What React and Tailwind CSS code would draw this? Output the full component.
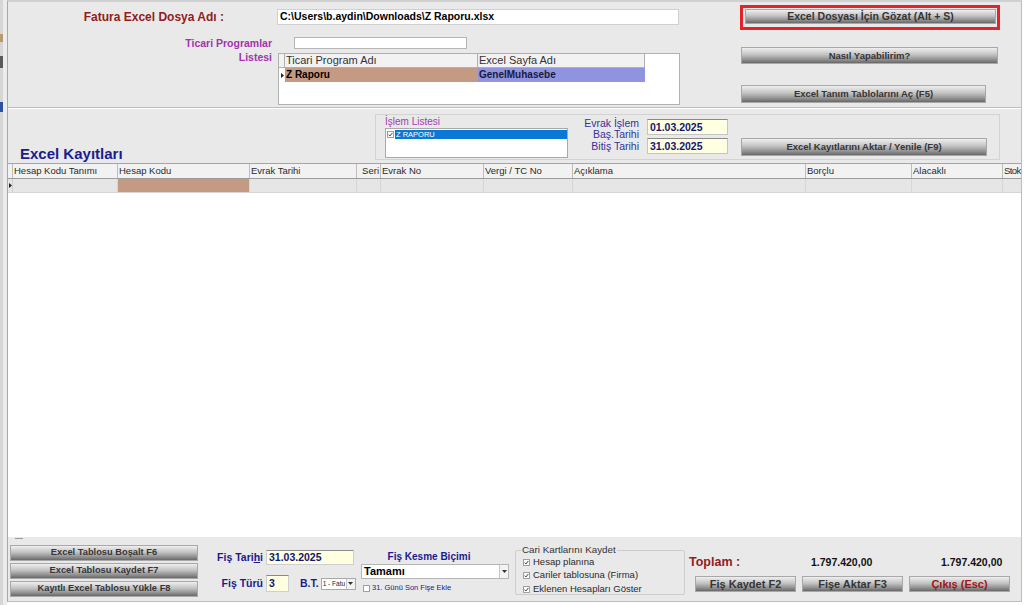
import React from 'react';

const Check = ({ checked = true }) => (
  <svg width="7" height="7" viewBox="0 0 7 7" className="shrink-0">
    <rect x="0.5" y="0.5" width="6" height="6" fill="#fff" stroke="#a0a0a0" />
    {checked && <path d="M1.5 3.6 L2.9 5 L5.4 1.9" fill="none" stroke="#444" strokeWidth="1" />}
  </svg>
);

const Arrow = () => (
  <div className="w-[9px] shrink-0 self-stretch flex items-center justify-center bg-[#f3f3f3] border-l border-[#c8c8c8]">
    <svg width="5" height="3" viewBox="0 0 5 3"><path d="M0 0 H5 L2.5 3 Z" fill="#333" /></svg>
  </div>
);

function Btn({ children, className = '', text = 'text-[#353535]' }) {
  return (
    <div className={`flex items-center justify-center border border-[#a8a8a8] bg-[linear-gradient(#efefef,#c2c2c2_45%,#8c8c8c_80%,#686868)] font-bold leading-none whitespace-nowrap ${text} ${className}`}>
      {children}
    </div>
  );
}

const gridCols = [
  { label: 'Hesap Kodu Tanımı', w: 'w-[105px]', cell: '', pad: 'px-[1px]' },
  { label: 'Hesap Kodu', w: 'w-[132px]', cell: 'bg-[#c59a83]', pad: 'px-[1px]' },
  { label: 'Evrak Tarihi', w: 'w-[107px]', cell: '', pad: 'px-[1px]' },
  { label: 'Seri', w: 'w-[24px]', cell: '', pad: 'px-[1px] text-right' },
  { label: 'Evrak No', w: 'w-[103px]', cell: '', pad: 'px-[1px]' },
  { label: 'Vergi / TC No', w: 'w-[89px]', cell: '', pad: 'px-[1px]' },
  { label: 'Açıklama', w: 'w-[233px]', cell: '', pad: 'px-[1px]' },
  { label: 'Borçlu', w: 'w-[106px]', cell: '', pad: 'px-[1px]' },
  { label: 'Alacaklı', w: 'w-[91px]', cell: '', pad: 'px-[1px]' },
  { label: 'Stok', w: 'w-[40px]', cell: '', pad: 'pl-[1px] tracking-[-0.6px]' },
];

export default function App() {
  return (
    <div className="w-[1024px] h-[605px] overflow-hidden bg-white flex font-['Liberation_Sans',Arial,sans-serif] text-[#222]">
      {/* window behind */}
      <div className="w-[7px] h-full flex bg-[#ececec]">
        <div className="w-[3px] h-full flex flex-col bg-[#d6d6d6]">
          <div className="h-[34px]" />
          <div className="h-[8px] bg-[#b89a72]" />
          <div className="h-[14px]" />
          <div className="h-[12px] bg-[#5a5a5a]" />
          <div className="h-[34px]" />
          <div className="h-[10px] bg-[#2f4fa0]" />
          <div className="flex-1" />
        </div>
      </div>

      {/* form */}
      <div className="w-[1015px] h-[602px] flex flex-col bg-[#e9e9e9] border-l border-r border-b border-t-2 border-l-[#a9a9a9] border-r-[#bdbdbd] border-b-[#bdbdbd] border-t-[#d0d0d0]">
        {/* top panel */}
        <div className="h-[106px] flex border-b border-[#bcbcbc] shrink-0">
          <div className="w-[732px]">
            <div className="mt-[7px] h-[16px] flex items-center">
              <div className="w-[216px] text-right text-[12px] font-bold text-[#931c1c]">Fatura Excel Dosya Adı :</div>
              <div className="ml-[53px] w-[402px] h-[16px] bg-white border border-[#d0d0d0] flex items-center pl-[2px] text-[10.5px] font-bold text-black">
                C:\Users\b.aydin\Downloads\Z Raporu.xlsx
              </div>
            </div>
            <div className="mt-[12px] flex">
              <div className="w-[264px] -mt-[1px] text-right text-[10.5px] font-bold text-[#a234ad] leading-[14px]">
                <div>Ticari Programlar</div>
                <div>Listesi</div>
              </div>
              <div className="ml-[6px] flex flex-col">
                <div className="ml-[16px] w-[173px] h-[12px] bg-white border border-[#b5b5b5]" />
                <div className="mt-[4px] w-[402px] h-[52px] bg-white border border-[#b0b0b0]">
                  <div className="h-[14px] flex text-[11px]">
                    <div className="w-[6px] shrink-0 bg-[#f2f2f2] border-r border-b border-[#b0b0b0]" />
                    <div className="w-[193px] shrink-0 bg-[#f2f2f2] border-r border-b border-[#b0b0b0] pl-[1px] leading-[13px] text-[#333]">Ticari Program Adı</div>
                    <div className="w-[167px] shrink-0 bg-[#f2f2f2] border-r border-b border-[#b0b0b0] pl-[1px] leading-[13px] text-[#333]">Excel Sayfa Adı</div>
                  </div>
                  <div className="h-[14px] flex font-bold text-[10px] text-black">
                    <div className="w-[6px] shrink-0 flex items-center justify-center">
                      <svg width="3" height="5" viewBox="0 0 3 5"><path d="M0 0 L3 2.5 L0 5 Z" fill="#222" /></svg>
                    </div>
                    <div className="w-[193px] shrink-0 bg-[#c59a83] pl-[1px] leading-[14px]">Z Raporu</div>
                    <div className="w-[167px] shrink-0 bg-[#8f93e0] pl-[1px] leading-[14px] text-[#1a1a3a]">GenelMuhasebe</div>
                  </div>
                </div>
              </div>
            </div>
          </div>
          <div className="flex flex-col">
            <div className="mt-[3px] w-[260px] h-[25px] border-[3px] border-[#e42328] p-[1px] pl-[2px]">
              <Btn className="w-[251px] h-[15px] text-[10.5px]">Excel Dosyası İçin Gözat (Alt + S)</Btn>
            </div>
            <Btn className="mt-[17px] ml-[1px] w-[257px] h-[17px] text-[9.5px]">Nasıl Yapabilirim?</Btn>
            <Btn className="mt-[21px] ml-[1px] w-[245px] h-[18px] text-[9.5px]">Excel Tanım Tablolarını Aç (F5)</Btn>
          </div>
        </div>

        {/* second panel */}
        <div className="h-[55px] flex shrink-0 border-t border-white">
          <div className="w-[367px] flex items-end pl-[12px]">
            <div className="text-[15px] font-bold text-[#1b1b8f] leading-[18px]">Excel Kayıtları</div>
          </div>
          <div className="mt-[5px] w-[625px] h-[46px] border border-[#d3d3d3] flex pl-[9px]">
            <div className="w-[183px] flex flex-col">
              <div className="text-[10px] leading-[12px] mt-[1px] text-[#a33bb0]">İşlem Listesi</div>
              <div className="h-[30px] bg-white border border-[#a9a9a9] pt-[1px]">
                <div className="h-[9px] flex items-center pl-[1px]">
                  <Check />
                  <div className="flex-1 h-[9px] ml-[1px] bg-[#0a78d7] text-white text-[7.5px] leading-[9px] pl-[1px]">Z RAPORU</div>
                </div>
              </div>
            </div>
            <div className="w-[71px] text-right text-[10.5px] text-[#33339b] leading-[11px] pt-[3px]">
              <div>Evrak İşlem</div>
              <div>Baş.Tarihi</div>
              <div className="mt-[1px]">Bitiş Tarihi</div>
            </div>
            <div className="ml-[8px] w-[81px] flex flex-col pt-[4px] gap-[3px]">
              <div className="h-[16px] bg-[#ffffe1] border border-[#c4c4c4] border-t-[#8a8a8a] pl-[2px] text-[10.5px] font-bold text-[#151570] leading-[14px]">01.03.2025</div>
              <div className="h-[16px] bg-[#ffffe1] border border-[#c4c4c4] border-t-[#8a8a8a] pl-[2px] text-[10.5px] font-bold text-[#151570] leading-[14px]">31.03.2025</div>
            </div>
            <Btn className="ml-[13px] mt-[23px] w-[246px] h-[18px] text-[9.5px]">Excel Kayıtlarını Aktar / Yenile (F9)</Btn>
          </div>
        </div>

        {/* main grid */}
        <div className="h-[374px] bg-white border-t border-[#a5a5a5] shrink-0 overflow-hidden text-[9.5px]">
          <div className="h-[15px] flex bg-[#f2f2f2] border-b border-[#9c9c9c]">
            <div className="w-[5px] shrink-0 border-r border-[#bdbdbd]" />
            {gridCols.map((c) => (
              <div key={c.label} className={`${c.w} ${c.pad} shrink-0 border-r border-[#bdbdbd] leading-[14px] text-[#2a2a2a] whitespace-nowrap`}>
                {c.label}
              </div>
            ))}
          </div>
          <div className="h-[14px] flex bg-[#e6e6e6] border-b border-[#d6d6d6]">
            <div className="w-[5px] shrink-0 border-r border-[#cfcfcf] flex items-center justify-center">
              <svg width="3" height="5" viewBox="0 0 3 5"><path d="M0 0 L3 2.5 L0 5 Z" fill="#222" /></svg>
            </div>
            {gridCols.map((c) => (
              <div key={c.label} className={`${c.w} shrink-0 border-r border-[#d6d6d6] ${c.cell}`} />
            ))}
          </div>
        </div>

        <div className="h-[6px] shrink-0 flex items-start pl-[7px] pt-[1px]">
          <div className="w-[8px] h-[1px] bg-[#9a9a9a]" />
        </div>

        {/* bottom panel */}
        <div className="flex-1 flex">
          <div className="ml-[2px] mt-[2px] w-[188px] shrink-0 flex flex-col gap-[2px] text-[9.3px]">
            <Btn className="h-[16px]">Excel Tablosu Boşalt F6</Btn>
            <Btn className="h-[16px]">Excel Tablosu Kaydet F7</Btn>
            <Btn className="h-[16px]">Kayıtlı Excel Tablosu Yükle F8</Btn>
          </div>

          <div className="ml-[19px] w-[142px] shrink-0 flex flex-col">
            <div className="mt-[7px] h-[15px] flex items-center">
              <div className="w-[46px] shrink-0 text-right text-[10.5px] font-bold text-[#1b1b8f] whitespace-nowrap">Fiş Tari<span className="underline">h</span>i</div>
              <div className="ml-[3px] w-[88px] shrink-0 h-[15px] bg-[#ffffe1] border border-[#cfcfcf] border-t-[#8a8a8a] pl-[2px] text-[10.5px] font-bold text-[#151570] leading-[13px]">31.03.2025</div>
            </div>
            <div className="mt-[10px] h-[17px] flex items-center">
              <div className="w-[46px] shrink-0 text-right text-[10.5px] font-bold text-[#1b1b8f] whitespace-nowrap">Fiş Türü</div>
              <div className="ml-[3px] w-[23px] shrink-0 h-[17px] bg-[#ffffe1] border border-[#cfcfcf] border-t-[#8a8a8a] pl-[2px] text-[10.5px] font-bold text-[#151570] leading-[14px]">3</div>
              <div className="ml-[11px] shrink-0 text-[10.5px] font-bold text-[#1b1b8f]">B.T.</div>
              <div className="ml-[2px] w-[35px] shrink-0 h-[12px] bg-white border border-[#a9a9a9] flex items-center">
                <div className="flex-1 text-[6.5px] leading-[10px] pl-[1px] whitespace-nowrap">1 - Fatu</div>
                <Arrow />
              </div>
            </div>
          </div>

          <div className="ml-[2px] w-[148px] shrink-0 flex flex-col">
            <div className="mt-[7px] text-center pr-[12px] text-[10px] font-bold text-[#1b1b8f] leading-[13px]">Fiş Kesme Biçimi</div>
            <div className="mt-[1px] h-[15px] bg-white border border-[#b5b5b5] flex items-center">
              <div className="flex-1 pl-[2px] text-[11px] font-bold text-black leading-[13px]">Tamamı</div>
              <Arrow />
            </div>
            <div className="mt-[4px] flex items-center pl-[2px] gap-[2px]">
              <Check checked={false} />
              <div className="text-[7.5px] text-[#1b1b8f] leading-[10px]">31. Günü Son Fişe Ekle</div>
            </div>
          </div>

          <fieldset className="ml-[6px] mt-[1px] w-[170px] shrink-0 h-[51px] border border-[#cdcdcd] rounded-[2px] px-[7px] text-[9.5px] text-[#2a2a2a]">
            <legend className="-ml-[2px] px-[1px] leading-[12px] text-[#333] text-[9.8px]">Cari Kartlarını Kaydet</legend>
            <div className="flex flex-col gap-[1px] leading-[12px]">
              <div className="flex items-center gap-[3px]"><Check />Hesap planına</div>
              <div className="flex items-center gap-[3px]"><Check />Cariler tablosuna (Firma)</div>
              <div className="flex items-center gap-[3px] mt-[1px]"><Check />Eklenen Hesapları Göster</div>
            </div>
          </fieldset>

          <div className="ml-[4px] flex flex-col">
            <div className="mt-[12px] h-[15px] flex items-center">
              <div className="w-[122px] text-[12.5px] font-bold text-[#931c1c]">Toplam :</div>
              <div className="w-[130px] text-[10.5px] font-bold text-[#111]">1.797.420,00</div>
              <div className="text-[10.5px] font-bold text-[#111]">1.797.420,00</div>
            </div>
            <div className="mt-[6px] ml-[6px] flex gap-[6px] text-[11px]">
              <Btn className="w-[101px] h-[16px]">Fiş Kaydet F2</Btn>
              <Btn className="w-[101px] h-[16px]">Fişe Aktar F3</Btn>
              <Btn className="w-[101px] h-[16px]" text="text-[#a11616]">Çıkış (Esc)</Btn>
            </div>
          </div>
        </div>
      </div>
    </div>
  );
}
